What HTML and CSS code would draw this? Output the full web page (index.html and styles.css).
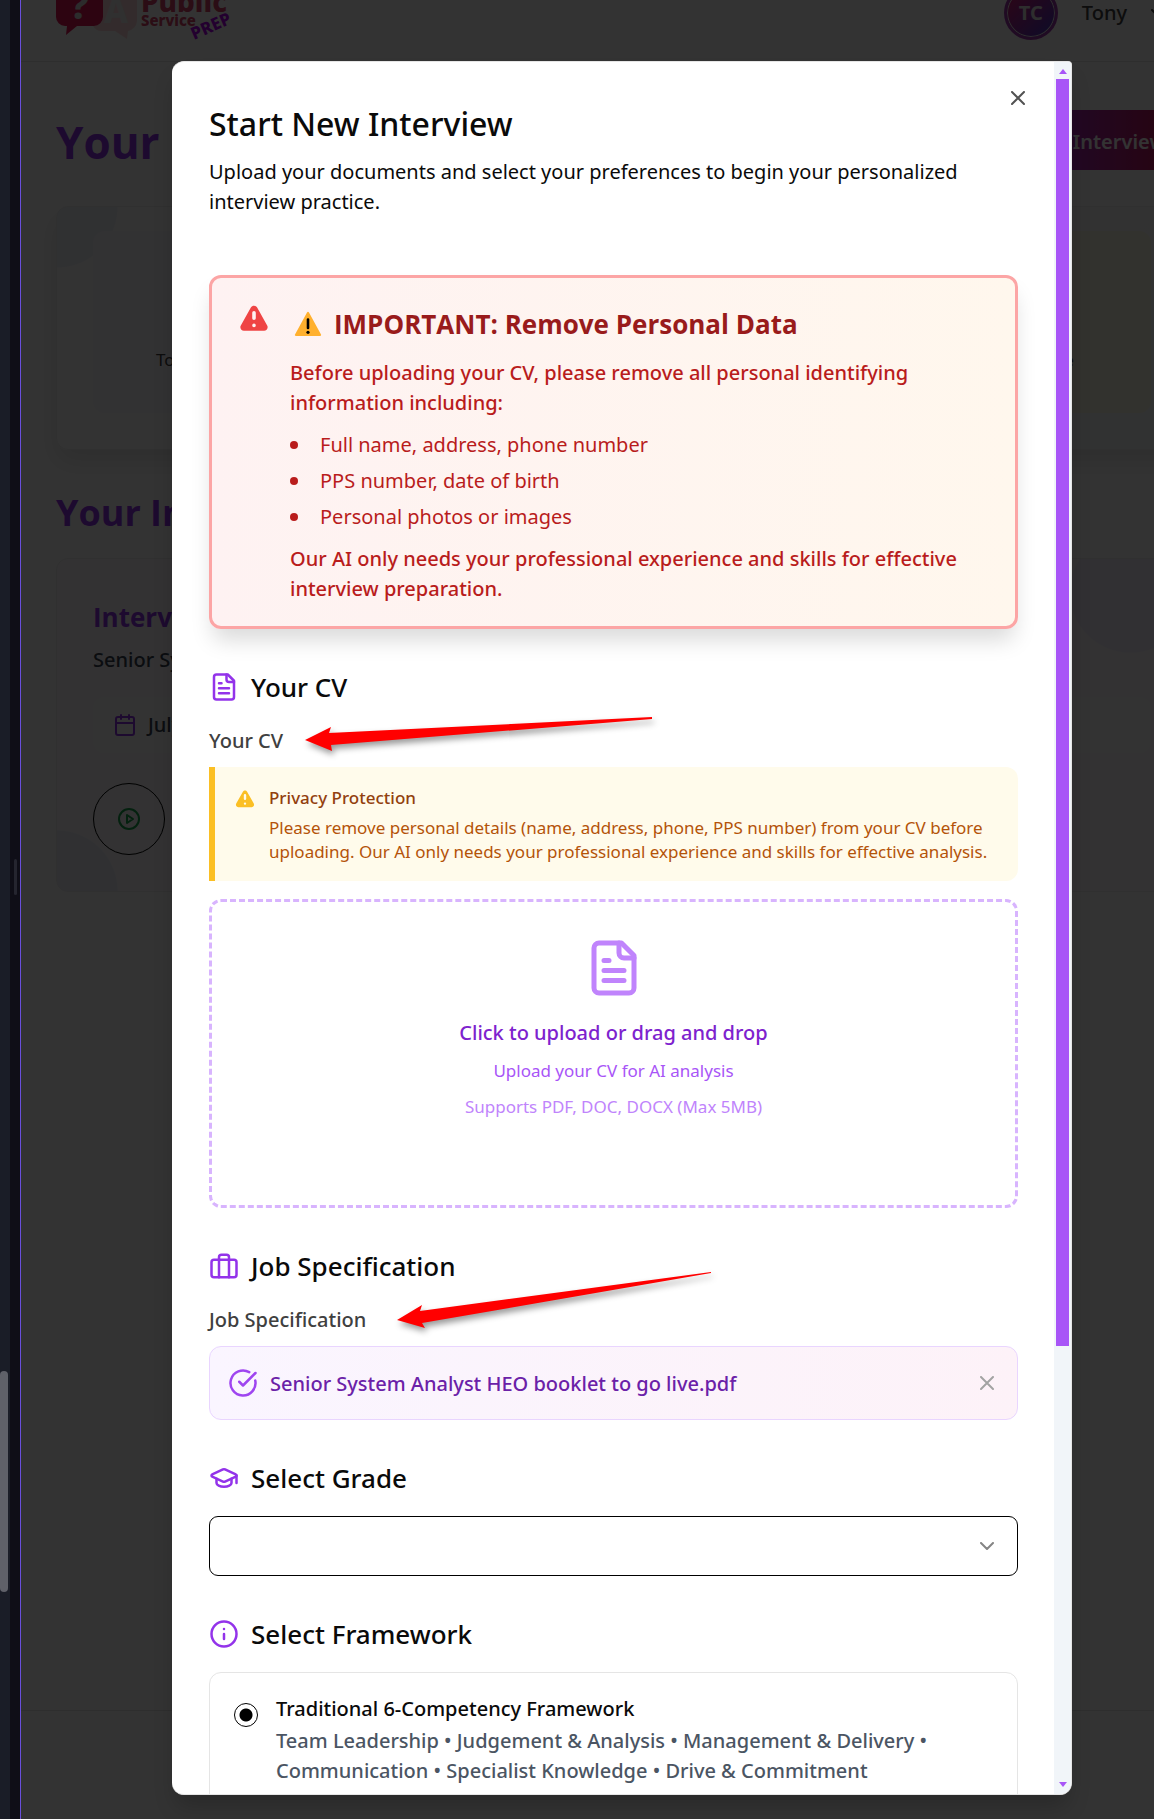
FILE: index.html
```html
<!DOCTYPE html>
<html lang="en">
<head>
<meta charset="utf-8">
<meta name="viewport" content="width=device-width, initial-scale=1">
<title>Public Service Prep - Start New Interview</title>
<link rel="stylesheet" href="styles.css">
</head>
<body>
<svg class="sprite" aria-hidden="true">
  <symbol id="i-file" viewBox="0 0 24 24"><path d="M15 2H6a2 2 0 0 0-2 2v16a2 2 0 0 0 2 2h12a2 2 0 0 0 2-2V7Z"/><path d="M14 2v4a2 2 0 0 0 2 2h4M10 9H8M16 13H8M16 17H8"/></symbol>
  <symbol id="i-close" viewBox="0 0 14 14"><path d="M1 1l12 12M13 1L1 13"/></symbol>
  <symbol id="i-chevron" viewBox="0 0 14 8"><path d="M1 1l6 6 6-6"/></symbol>
  <symbol id="i-warn" viewBox="0 0 20 20"><path fill-rule="evenodd" d="M8.257 3.099c.765-1.36 2.722-1.36 3.486 0l5.58 9.92c.75 1.334-.213 2.98-1.742 2.98H4.42c-1.53 0-2.493-1.646-1.743-2.98l5.58-9.92zM11 13a1 1 0 11-2 0 1 1 0 012 0zm-1-8a1 1 0 00-1 1v3a1 1 0 002 0V6a1 1 0 00-1-1z" clip-rule="evenodd"/></symbol>
</svg>

<div class="shell">
  <aside class="rail">
    <div class="rail-side"><span class="rail-scroll"></span></div>
    <div class="rail-edge"><span class="rail-grip"></span></div>
  </aside>

  <div class="viewport">
    <div class="app">
      <header class="topbar">
        <svg class="logo" width="176" height="60" viewBox="0 0 176 60" role="img" aria-label="Public Service Prep">
          <path fill="#ffb0b8" opacity=".5" d="M47 0h26a8 8 0 0 1 8 8v27a11 11 0 0 1-9 10l-1 8-12-8H46a10 10 0 0 1-9-5h2a9 9 0 0 0 8-9z"/>
          <path fill="#e01858" d="M0 0h47v31a9 9 0 0 1-9 9H21L10 49l1-9H9a9 9 0 0 1-9-9z"/>
          <text class="logo-mark" x="14" y="33" font-size="38" fill="#ddd">?</text>
          <text class="logo-mark" x="48" y="37" font-size="34" fill="#eee">A</text>
          <text class="logo-mark" x="85" y="26" font-size="28" fill="#d84068">Public</text>
          <text class="logo-mark" x="85" y="40" font-size="15" fill="#d84068">Service</text>
          <text class="logo-mark" x="138" y="54" font-size="17" fill="#b000e8" transform="rotate(-24 138 54)">PREP</text>
        </svg>
        <button class="user" type="button">
          <span class="avatar">TC</span>
          <span>Tony</span>
          <svg class="stroke" width="14" height="8"><use href="#i-chevron"/></svg>
        </button>
      </header>

      <main class="main">
        <div class="page-head">
          <h1>Your Interviews</h1>
          <button class="cta" type="button">New Interview</button>
        </div>
        <section class="stats">
          <div class="stat">Total Sessions</div>
          <div class="stat"></div>
          <div class="stat"></div>
          <div class="stat stat-gold">Best Score</div>
        </section>
        <h2 class="list-title">Your Interviews</h2>
        <article class="session">
          <h3>Interview</h3>
          <p>Senior System</p>
          <div class="date">
            <svg class="stroke" width="24" height="24" viewBox="0 0 24 24"><rect x="3" y="4" width="18" height="18" rx="2"/><path d="M16 2v4M8 2v4M3 10h18"/></svg>
            <span>July</span>
          </div>
          <button class="play" type="button" aria-label="Play">
            <svg class="stroke" width="24" height="24" viewBox="0 0 24 24"><circle cx="12" cy="12" r="10"/><path d="M10 8l6 4-6 4z"/></svg>
          </button>
        </article>
      </main>
      <footer class="foot"></footer>
    </div>

    <div class="overlay">
      <div class="dialog" role="dialog" aria-modal="true" aria-labelledby="dlg-title">
        <div class="dialog-body">
          <button class="close" type="button" aria-label="Close"><svg class="stroke" width="14" height="14"><use href="#i-close"/></svg></button>
          <h2 class="title" id="dlg-title">Start New Interview</h2>
          <p class="lead">Upload your documents and select your preferences to begin your personalized interview practice.</p>

          <div class="alert">
            <svg class="alert-icon" width="36" height="36"><use href="#i-warn"/></svg>
            <div>
              <h3 class="alert-title">
                <svg width="28" height="28" viewBox="0 0 28 28" aria-hidden="true"><path fill="#ffb02e" d="M13 2.600a1.200 1.200 0 0 1 2 0L27 24.500a1 1 0 0 1-1 1.500H2a1 1 0 0 1-1-1.500z"/><path stroke="#000" stroke-width="2.600" stroke-linecap="round" d="M14 9.500v8.500"/><circle cx="14" cy="22.300" r="1.600"/></svg>
                <span>IMPORTANT: Remove Personal Data</span>
              </h3>
              <p class="alert-strong">Before uploading your CV, please remove all personal identifying information including:</p>
              <ul class="alert-list">
                <li>Full name, address, phone number</li>
                <li>PPS number, date of birth</li>
                <li>Personal photos or images</li>
              </ul>
              <p class="alert-strong">Our AI only needs your professional experience and skills for effective interview preparation.</p>
            </div>
          </div>

          <section class="block">
            <h3 class="block-title"><svg class="stroke" width="30" height="30"><use href="#i-file"/></svg>Your CV</h3>
            <label class="field-label" for="cv">Your CV</label>
            <div class="privacy">
              <svg width="24" height="24"><use href="#i-warn"/></svg>
              <div>
                <h4>Privacy Protection</h4>
                <p>Please remove personal details (name, address, phone, PPS number) from your CV before uploading. Our AI only needs your professional experience and skills for effective analysis.</p>
              </div>
            </div>
            <button class="drop" id="cv" type="button">
              <svg class="stroke" width="60" height="60"><use href="#i-file"/></svg>
              <span class="drop-main">Click to upload or drag and drop</span>
              <span class="drop-sub">Upload your CV for AI analysis</span>
              <span class="drop-hint">Supports PDF, DOC, DOCX (Max 5MB)</span>
            </button>
            <svg class="arrow arrow-cv" width="360" height="50" viewBox="0 0 360 50" aria-hidden="true"><path d="M5 28L31 15L29 21L352 5L352 7L31 33L32 39Z"/></svg>
          </section>

          <section class="block">
            <h3 class="block-title"><svg class="stroke" width="30" height="30" viewBox="0 0 24 24"><rect x="2" y="7" width="20" height="14" rx="2"/><path d="M16 21V5a2 2 0 0 0-2-2h-4a2 2 0 0 0-2 2v16"/></svg>Job Specification</h3>
            <span class="field-label">Job Specification</span>
            <div class="file">
              <svg class="stroke" width="30" height="30" viewBox="0 0 24 24"><path d="M21.801 10A10 10 0 1 1 17 3.335"/><path d="M9 11l3 3L22 4"/></svg>
              <span class="file-name">Senior System Analyst HEO booklet to go live.pdf</span>
              <button class="file-remove" type="button" aria-label="Remove file"><svg class="stroke" width="14" height="14"><use href="#i-close"/></svg></button>
            </div>
            <svg class="arrow arrow-job" width="330" height="74" viewBox="0 0 330 74" aria-hidden="true"><path d="M5 53L30 38L28 44L319 5L319 6L30 56L33 61Z"/></svg>
          </section>

          <section class="block">
            <h3 class="block-title" id="grade-title"><svg class="stroke" width="30" height="30" viewBox="0 0 24 24"><path d="M21.420 10.922a1 1 0 0 0-.019-1.838L12.830 5.180a2 2 0 0 0-1.660 0L2.600 9.080a1 1 0 0 0 0 1.832l8.570 3.908a2 2 0 0 0 1.660 0z"/><path d="M22 10v6M6 12.500V16a6 3 0 0 0 12 0v-3.500"/></svg>Select Grade</h3>
            <div class="select">
              <select aria-labelledby="grade-title"><option></option></select>
              <svg class="stroke" width="14" height="8"><use href="#i-chevron"/></svg>
            </div>
          </section>

          <section class="block">
            <h3 class="block-title"><svg class="stroke" width="30" height="30" viewBox="0 0 24 24"><circle cx="12" cy="12" r="10"/><path d="M12 16v-4M12 8h.01"/></svg>Select Framework</h3>
            <label class="option">
              <input type="radio" name="framework" checked>
              <span class="option-text">
                <strong>Traditional 6-Competency Framework</strong>
                <span>Team Leadership • Judgement &amp; Analysis • Management &amp; Delivery • Communication • Specialist Knowledge • Drive &amp; Commitment</span>
              </span>
            </label>
          </section>
        </div>
        <div class="scrollbar" aria-hidden="true">
          <svg width="8" height="5"><path d="M4 0l4 5H0z"/></svg>
          <div class="track"><div class="thumb" style="height: 74.600%"></div></div>
          <svg width="8" height="5"><path d="M0 0h8L4 5z"/></svg>
        </div>
      </div>
    </div>
  </div>
</div>
</body>
</html>
```
FILE: styles.css
```css
* { box-sizing: border-box; }

body, h1, h2, h3, h4, p, ul { margin: 0; padding: 0; }

body {
  font: 400 20px/30px "Noto Sans", "Open Sans", sans-serif;
  color: #0a0a0a;
  overflow: hidden;
}

button, select { font: inherit; color: inherit; }
button { background: none; border: 0; padding: 0; cursor: pointer; }
svg { display: block; flex: none; }

.sprite { position: absolute; width: 0; height: 0; }
.stroke { fill: none; stroke: currentColor; stroke-width: 2; stroke-linecap: round; stroke-linejoin: round; }

/* Frame */
.shell { display: flex; height: 100vh; }
.rail { display: flex; flex: none; width: 21px; border-right: 1px solid #6a4fdc; background: #0f0e17; }
.rail-side { width: 10px; background: #1a1d27; padding-top: 1371px; }
.rail-scroll { display: block; width: 8px; height: 221px; border-radius: 4px; background: #5f6169; }
.rail-edge { flex: 1; display: flex; align-items: center; padding: 0 3px 65px 4px; }
.rail-grip { width: 3px; height: 36px; border-radius: 2px; background: #25252f; }
.viewport { position: relative; flex: 1; min-width: 0; overflow: hidden; }

/* Page behind the dialog */
.app { display: flex; flex-direction: column; width: calc(100% + 69px); height: 100%; background: #fff; }
.topbar {
  display: flex; justify-content: space-between; align-items: flex-end;
  height: 62px; padding: 0 35px 21px; border-bottom: 1px solid #e5e5e5;
}
.logo { margin-bottom: -6px; }
.logo-mark { font-family: "Noto Sans", sans-serif; font-weight: 800; }
.user { display: flex; align-items: center; gap: 24px; padding-right: 23px; font-weight: 500; color: #404040; }
.avatar {
  display: grid; place-items: center; width: 54px; height: 54px; border-radius: 50%;
  border: 3px solid #a23ab0; box-shadow: inset 0 0 0 1px #e5e5e5;
  background: linear-gradient(135deg, #e11d70, #4338ca); color: #e5e5e5; font-weight: 700;
}
.main { flex: 1; padding: 48px 35px 0; }
.page-head { display: flex; justify-content: space-between; align-items: center; height: 60px; margin-bottom: 36px; }
.page-head h1, .list-title, .session h3, .alert-title { font-family: "Open Sans", "Noto Sans", sans-serif; }
.page-head h1 { padding-top: 4px; font-size: 44px; line-height: 60px; color: #9333ea; }
.cta { height: 60px; padding: 4px 22px 0; background: linear-gradient(90deg, #9333ea, #be185d 85%); color: #fff; font-weight: 600; }
.stats {
  display: grid; grid-template-columns: repeat(4, 1fr); gap: 36px; height: 244px; padding: 24px 36px 36px;
  border: 1px solid #f0f0f0; border-radius: 12px; box-shadow: 0 12px 24px rgba(0,0,0,.1);
  background: radial-gradient(circle at 0 0, #f1f3fb 60px, transparent 61px), linear-gradient(135deg, #fff, #f5f8f8);
}
.stat { display: flex; align-items: flex-end; justify-content: center; padding-bottom: 38px; border-radius: 12px; background: #faf7ff; font-size: 17px; color: #404040; }
.stat-gold { background: #fbf8e3; }
.list-title { margin: 36px 0 18px; font-size: 36px; line-height: 54px; color: #9333ea; }
.session {
  height: 334px; padding: 40px 36px 36px; border: 1px solid #f0f0f0; border-radius: 12px; color: #374151; font-weight: 500;
  background: radial-gradient(circle at 0 100%, #eef1fb 60px, transparent 61px), radial-gradient(circle at 95% 10%, #f6effd 60px, transparent 61px), #fcfbff;
}
.session h3 { font-size: 26px; line-height: 36px; color: #9333ea; margin-bottom: 10px; }
.date { display: flex; align-items: center; gap: 11px; height: 56px; margin: 22px 0 30px; padding: 0 20px; border-radius: 12px; background: #fff; }
.date .stroke { color: #9333ea; }
.play { display: grid; place-items: center; width: 72px; height: 72px; border: 1px solid #000; border-radius: 50%; color: #16a34a; }
.foot { height: 109px; border-top: 1px solid #e5e5e5; }

/* Dialog */
.overlay { position: absolute; inset: 0; display: flex; padding: 61px 82px 24px 151px; background: rgba(0,0,0,.8); }
.dialog {
  display: flex; flex: 1; min-width: 0; overflow: hidden; border: 1px solid #e5e5e5; border-width: 1px 1px 1px 0;
  border-radius: 12px 4px 12px 12px; background: #fff; box-shadow: 0 15px 22px -4px rgba(0,0,0,.2);
}
.dialog-body { position: relative; flex: 1; min-width: 0; overflow: hidden; padding: 42px 36px 0 37px; }
.close { position: absolute; top: 29px; right: 29px; padding: 0; color: #525252; }
.title { font-size: 32px; line-height: 40px; font-weight: 500; margin-bottom: 13px; }
.lead { margin-bottom: 58px; }

.alert {
  display: flex; gap: 18px; padding: 24px 24px 22px; border: 3px solid #fca5a5; border-radius: 12px;
  background: linear-gradient(90deg, #fef2f2, #fff7ed); box-shadow: 0 15px 22px -4px rgba(0,0,0,.15);
  color: #b91c1c;
}
.alert-icon { fill: #ef4444; }
.alert-title { display: flex; align-items: center; gap: 12px; margin: 4px 0 16px; padding-left: 4px; font-size: 26px; line-height: 36px; color: #991b1b; }
.alert-strong { font-weight: 500; }
.alert-list { display: grid; gap: 6px; margin: 12px 0; list-style: none; }
.alert-list li { display: flex; align-items: center; gap: 22px; }
.alert-list li::before { content: ""; width: 8px; height: 8px; border-radius: 50%; background: #b91c1c; }

.block { position: relative; margin-top: 40px; }
.block-title { display: flex; align-items: center; gap: 12px; margin-bottom: 20px; font-size: 26px; line-height: 36px; font-weight: 500; }
.block-title .stroke { color: #9333ea; }
.field-label { display: block; padding-top: 1px; margin-bottom: 11px; font-weight: 500; color: #404040; }

.privacy {
  display: flex; gap: 12px; margin-bottom: 18px; padding: 19px 18px 17px; border-left: 6px solid #fbbf24;
  border-radius: 0 12px 12px 0; background: #fffbeb; font-size: 17px; line-height: 24px; color: #b45309;
}
.privacy svg { margin-top: 2px; fill: #fbbf24; }
.privacy h4 { margin-bottom: 6px; font-weight: 500; color: #92400e; }

.drop { display: flex; flex-direction: column; align-items: center; width: 100%; padding: 36px 36px 86px; border: 3px dashed #d8b4fe; border-radius: 12px; }
.drop .stroke { color: #c084fc; }
.drop-main { margin: 20px 0 11px; font-weight: 500; color: #7e22ce; }
.drop-sub { margin-bottom: 12px; font-size: 17px; line-height: 24px; color: #a855f7; }
.drop-hint { font-size: 17px; line-height: 24px; color: #c084fc; }

.file { display: flex; align-items: center; gap: 12px; height: 74px; padding: 0 23px 0 18px; border: 1px solid #e9d5ff; border-radius: 12px; background: linear-gradient(90deg, #faf5ff, #fdf2f8); }
.file > .stroke { color: #9f45f0; }
.file-name { flex: 1; padding-top: 2px; font-weight: 500; color: #6b21a8; }
.file-remove { color: #a3a3a3; }

.select { display: grid; align-items: center; }
.select > * { grid-area: 1 / 1; }
.select select { appearance: none; width: 100%; height: 60px; padding: 0 24px; border: 1px solid #000; border-radius: 9px; background: #fff; }
.select .stroke { justify-self: end; margin-right: 24px; color: #858585; pointer-events: none; }

.option { display: flex; align-items: flex-start; gap: 18px; padding: 21px 24px 36px; border: 1px solid #e5e5e5; border-radius: 12px; }
.option input { appearance: none; flex: none; width: 24px; height: 24px; margin: 9px 0 0; border: 1px solid #000; border-radius: 50%; background: radial-gradient(circle, #000 6px, #fff 7px); }
.option-text { display: grid; gap: 2px; font-weight: 500; color: #4b5563; }
.option-text strong { font-weight: 500; color: #0a0a0a; }

/* Annotation arrows over the form */
.arrow { position: absolute; overflow: visible; fill: #f00; filter: drop-shadow(2px 4px 3px rgba(0,0,0,.4)); pointer-events: none; }
.arrow-cv { left: 91px; top: 43px; }
.arrow-job { left: 183px; top: 19px; }

.scrollbar { display: flex; flex-direction: column; align-items: center; flex: none; width: 17px; padding: 7px 0; background: #f1f5f9; }
.scrollbar svg { fill: #a855f7; }
.track { flex: 1; width: 13px; margin: 5px 0; }
.thumb { background: #a855f7; }
```
